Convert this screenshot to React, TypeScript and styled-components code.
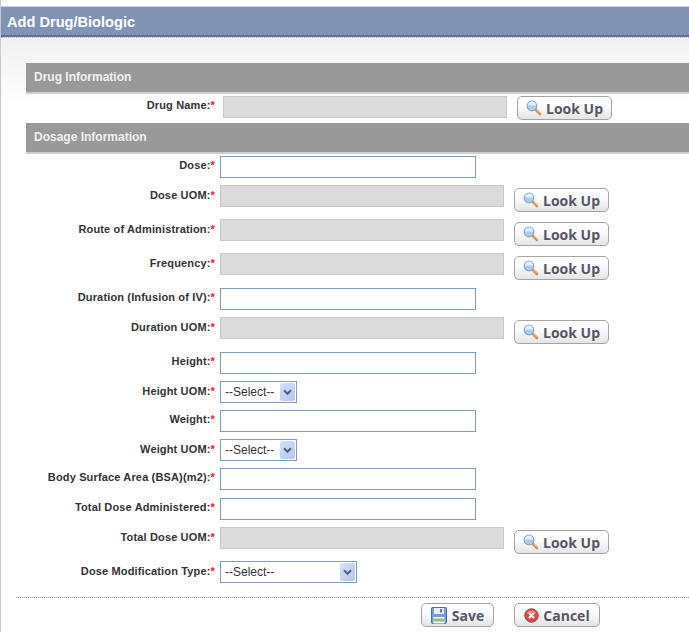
import styled, { createGlobalStyle } from "styled-components";

const GlobalStyle = createGlobalStyle`
	html, body {
		margin: 0;
		padding: 0;
		background: #fff;
		font-family: "Liberation Sans", Arial, sans-serif;
	}
`;

const doseRows = [
	{ label: "Dose", kind: "text", height: 29 },
	{ label: "Dose UOM", kind: "lookup", height: 34 },
	{ label: "Route of Administration", kind: "lookup", height: 34 },
	{ label: "Frequency", kind: "lookup", height: 35 },
	{ label: "Duration (Infusion of IV)", kind: "text", height: 29 },
	{ label: "Duration UOM", kind: "lookup", height: 35 },
	{ label: "Height", kind: "text", height: 29 },
	{ label: "Height UOM", kind: "select", height: 29 },
	{ label: "Weight", kind: "text", height: 29 },
	{ label: "Weight UOM", kind: "select", height: 29 },
	{ label: "Body Surface Area (BSA)(m2)", kind: "text", height: 30 },
	{ label: "Total Dose Administered", kind: "text", height: 29 },
	{ label: "Total Dose UOM", kind: "lookup", height: 34 },
	{ label: "Dose Modification Type", kind: "wideSelect", height: 36 },
];

function SearchIcon() {
	return (
		<svg width="16" height="16" viewBox="0 0 16 16">
			<path d="M9.5 9.5 L14 14" stroke="#c98f4a" strokeWidth="2.6" strokeLinecap="round" />
			<path d="M10.5 9.8 L14.2 13.5" stroke="#f2d29b" strokeWidth="0.9" />
			<circle cx="6" cy="6" r="4.9" fill="#a9cbee" stroke="#8ba6c6" strokeWidth="1.1" />
			<path d="M2 5.6 A4 4 0 0 1 10 5.6 Z" fill="#e3eefa" />
		</svg>
	);
}

function SaveIcon() {
	return (
		<svg width="16" height="17" viewBox="0 0 16 17">
			<rect x="0.5" y="0.5" width="15" height="16" rx="1" fill="#6f9fdc" stroke="#3f6fb0" />
			<rect x="3" y="1" width="10" height="6" fill="#e8f0fa" />
			<rect x="9" y="2" width="2" height="3.5" fill="#4f7fbf" />
			<rect x="2.5" y="10" width="11" height="6.5" fill="#f4f7fb" />
			<rect x="2.5" y="11.5" width="11" height="3" fill="#8cc46a" />
		</svg>
	);
}

function CancelIcon() {
	return (
		<svg width="15" height="15" viewBox="0 0 16 16">
			<circle cx="8" cy="8" r="7.2" fill="#d9494a" stroke="#a83a3c" />
			<path d="M2.5 6 A6 6 0 0 1 13.5 6 Z" fill="#e88383" />
			<path d="M5.3 5.3 L10.7 10.7 M10.7 5.3 L5.3 10.7" stroke="#f6eeee" strokeWidth="2.4" />
		</svg>
	);
}

function Arrow() {
	return (
		<SelectArrow>
			<svg width="9" height="7" viewBox="0 0 9 7">
				<path d="M1 1.2 L4.5 4.8 L8 1.2" fill="none" stroke="#4d6185" strokeWidth="2" />
			</svg>
		</SelectArrow>
	);
}

function LookUp() {
	return (
		<ActionButton type="button" $width={95} $gap={4}>
			<SearchIcon />
			Look Up
		</ActionButton>
	);
}

function Label({ text, top }: { text: string; top: number }) {
	return (
		<FieldLabel $top={top}>
			{text}:<Required>*</Required>
		</FieldLabel>
	);
}

export default function App() {
	return (
		<Page>
			<GlobalStyle />
			<TitleBar>Add Drug/Biologic</TitleBar>
			<Content>
				<Form>
					<SectionBar>Drug Information</SectionBar>
					<Row $height={29} $gap={8}>
						<Label text="Drug Name" top={3} />
						<LockedField />
						<ButtonSlot $left={2} $top={0}>
							<LookUp />
						</ButtonSlot>
					</Row>
					<SectionBar>Dosage Information</SectionBar>
					{doseRows.map((row) => (
						<Row key={row.label} $height={row.height} $gap={5}>
							<Label text={row.label} top={row.kind === "text" ? 3 : 4} />
							{row.kind === "text" && <TextField />}
							{row.kind === "lookup" && (
								<>
									<LockedField />
									<ButtonSlot $left={5} $top={3}>
										<LookUp />
									</ButtonSlot>
								</>
							)}
							{row.kind === "select" && (
								<SelectBox $width={77}>
									<SelectInput>
										<option>--Select--</option>
									</SelectInput>
									<Arrow />
								</SelectBox>
							)}
							{row.kind === "wideSelect" && (
								<SelectBox $width={137}>
									<SelectInput>
										<option>--Select--</option>
									</SelectInput>
									<Arrow />
								</SelectBox>
							)}
						</Row>
					))}
				</Form>
				<Footer>
					<ActionButton type="button" $width={73} $gap={5}>
						<SaveIcon />
						Save
					</ActionButton>
					<ActionButton type="button" $width={86} $gap={4}>
						<CancelIcon />
						Cancel
					</ActionButton>
				</Footer>
			</Content>
		</Page>
	);
}

const Page = styled.div`
	width: 689px;
	height: 632px;
	box-sizing: border-box;
	padding-top: 6px;
	border-left: 1px solid #c8c8c8;
	overflow: hidden;
	background: #fff;
`;

const TitleBar = styled.div`
	height: 28px;
	padding-left: 6px;
	border-top: 1px solid #c3cddd;
	border-bottom: 2px solid #5d7396;
	background: #8093b5;
	color: #fff;
	font-size: 14.6px;
	font-weight: bold;
	line-height: 31px;
`;

const Content = styled.div`
	padding-top: 1px;
	border-top: 1px dotted #a9b0bb;
	background: linear-gradient(#f1f1f1, #fff 72px);
`;

const Form = styled.div`
	padding: 24px 0 0 25px;
`;

const SectionBar = styled.div`
	height: 29px;
	padding-left: 8px;
	border-bottom: 2px solid #cfcfcf;
	background: #999;
	color: #f0f0f0;
	font-size: 12px;
	font-weight: bold;
	line-height: 28px;
`;

const Row = styled.div<{ $height: number; $gap: number }>`
	display: flex;
	align-items: flex-start;
	gap: ${(p) => p.$gap}px;
	height: ${(p) => p.$height}px;
	padding-top: 2px;
	box-sizing: border-box;
`;

const FieldLabel = styled.div<{ $top: number }>`
	width: 189px;
	padding-top: ${(p) => p.$top}px;
	color: #333;
	font-size: 11px;
	font-weight: bold;
	letter-spacing: 0.15px;
	line-height: 13px;
	text-align: right;
	white-space: nowrap;
`;

const Required = styled.span`
	color: #e0203a;
`;

const TextField = styled.input.attrs({ type: "text" })`
	width: 256px;
	height: 22px;
	box-sizing: border-box;
	border: 1px solid #7f9db9;
	background: #fff;
	outline: none;
`;

const LockedField = styled.div`
	width: 284px;
	height: 22px;
	box-sizing: border-box;
	border: 1px solid #c8c8c8;
	background: #dbdbdb;
`;

const ButtonSlot = styled.div<{ $left: number; $top: number }>`
	margin-left: ${(p) => p.$left}px;
	padding-top: ${(p) => p.$top}px;
`;

const ActionButton = styled.button<{ $width: number; $gap: number }>`
	display: flex;
	align-items: center;
	justify-content: center;
	gap: ${(p) => p.$gap}px;
	width: ${(p) => p.$width}px;
	height: 24px;
	padding: 0;
	box-sizing: border-box;
	border: 1px solid #a3a3a3;
	border-radius: 5px;
	background: linear-gradient(#fff, #fafafa 45%, #e4e4e4);
	color: #545765;
	font-family: "Open Sans", Verdana, sans-serif;
	font-size: 14px;
	font-weight: bold;
`;

const SelectBox = styled.div<{ $width: number }>`
	position: relative;
	width: ${(p) => p.$width}px;
	height: 22px;
	box-sizing: border-box;
	border: 1px solid #7f9db9;
	background: #fff;
`;

const SelectInput = styled.select`
	display: block;
	width: 100%;
	height: 100%;
	padding: 0 0 0 4px;
	border: 0;
	outline: none;
	appearance: none;
	background: transparent;
	color: #333;
	font-family: "Liberation Sans", Arial, sans-serif;
	font-size: 12px;
`;

const SelectArrow = styled.div`
	position: absolute;
	top: 1px;
	right: 1px;
	display: flex;
	align-items: center;
	justify-content: center;
	width: 15px;
	height: 18px;
	border-radius: 2px;
	background: linear-gradient(135deg, #d6e0f7, #b4c6ef);
	pointer-events: none;
`;

const Footer = styled.div`
	display: flex;
	gap: 20px;
	height: 34px;
	margin: 2px 0 0 15px;
	padding: 5px 0 0 405px;
	box-sizing: border-box;
	border-top: 1px dotted #999;
`;
